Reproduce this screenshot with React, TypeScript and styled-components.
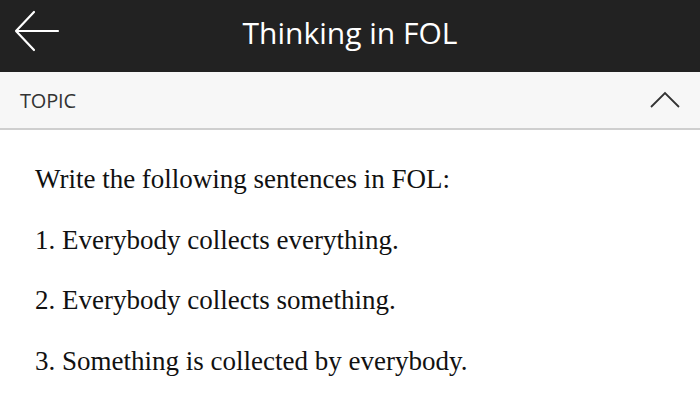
import React from 'react';
import styled, { createGlobalStyle } from 'styled-components';

const GlobalStyle = createGlobalStyle`
  html, body {
    margin: 0;
    padding: 0;
    background: #ffffff;
  }
`;

const Screen = styled.div`
  width: 700px;
  height: 412px;
  overflow: hidden;
  background: #ffffff;
`;

const Header = styled.header`
  height: 72px;
  background: #222222;
  display: grid;
  grid-template-columns: 72px 1fr 72px;
  align-items: start;
`;

const BackButton = styled.button`
  background: none;
  border: 0;
  padding: 9px 0 0 14px;
  display: flex;
  align-items: center;
  cursor: pointer;
`;

const Title = styled.h1`
  margin: 0;
  text-align: center;
  color: #ffffff;
  font-family: 'Open Sans', sans-serif;
  font-weight: 400;
  font-size: 30px;
  line-height: 66px;
`;

const TopicBar = styled.div`
  height: 56px;
  background: #f7f7f7;
  border-bottom: 2px solid #cfcfcf;
  display: flex;
  align-items: center;
  justify-content: space-between;
  padding: 0 20px 0 20px;
`;

const TopicLabel = styled.span`
  font-family: 'Open Sans', sans-serif;
  font-size: 20px;
  color: #333333;
  letter-spacing: -0.2px;
`;

const Body = styled.main`
  padding: 19px 35px 0;
`;

const Line = styled.p`
  margin: 0;
  font-family: 'Liberation Serif', 'Times New Roman', serif;
  font-size: 27px;
  line-height: 60.5px;
  color: #111111;
`;

const ArrowIcon = () => (
  <svg width="46" height="44" viewBox="0 0 46 44" fill="none">
    <path
      d="M2 22 H44 M20 3 L2 22 L20 41"
      stroke="#ffffff"
      strokeWidth="2.2"
      strokeLinecap="round"
      strokeLinejoin="round"
    />
  </svg>
);

const ChevronUp = () => (
  <svg width="30" height="18" viewBox="0 0 30 18" fill="none">
    <path d="M1 16 L15 2 L29 16" stroke="#333333" strokeWidth="1.8" />
  </svg>
);

const lines = [
  'Write the following sentences in FOL:',
  '1. Everybody collects everything.',
  '2. Everybody collects something.',
  '3. Something is collected by everybody.',
];

export default function App() {
  return (
    <Screen>
      <GlobalStyle />
      <Header>
        <BackButton aria-label="Back">
          <ArrowIcon />
        </BackButton>
        <Title>Thinking in FOL</Title>
        <span />
      </Header>
      <TopicBar>
        <TopicLabel>TOPIC</TopicLabel>
        <ChevronUp />
      </TopicBar>
      <Body>
        {lines.map((line) => (
          <Line key={line}>{line}</Line>
        ))}
      </Body>
    </Screen>
  );
}
